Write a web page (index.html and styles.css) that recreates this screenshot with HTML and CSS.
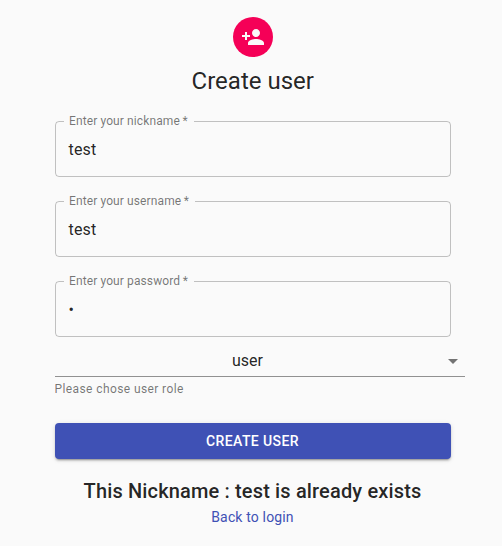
FILE: index.html
```html
<!DOCTYPE html>
<html lang="en">
<head>
<meta charset="utf-8">
<title>Create user</title>
<link rel="stylesheet" href="styles.css">
</head>
<body>
<main class="container">
  <div class="avatar">
    <svg viewBox="0 0 24 24" width="24" height="24" fill="currentColor"><path d="M15 12c2.210 0 4-1.790 4-4s-1.790-4-4-4-4 1.790-4 4 1.790 4 4 4zm-9-2V7H4v3H1v2h3v3h2v-3h3v-2H6zm9 4c-2.670 0-8 1.340-8 4v2h16v-2c0-2.660-5.330-4-8-4z"/></svg>
  </div>
  <h1 class="title">Create user</h1>
  <form class="form">
    <fieldset class="field"><legend>Enter your nickname&thinsp;*</legend><div class="value">test</div></fieldset>
    <fieldset class="field"><legend>Enter your username&thinsp;*</legend><div class="value">test</div></fieldset>
    <fieldset class="field field-last"><legend>Enter your password&thinsp;*</legend><div class="value">•</div></fieldset>
    <div class="select"><span>user</span><svg viewBox="0 0 24 24" width="24" height="24" fill="currentColor"><path d="M7 10l5 5 5-5z"/></svg></div>
    <p class="helper">Please chose user role</p>
    <button class="submit" type="button">CREATE USER</button>
  </form>
  <h2 class="error">This Nickname : test is already exists</h2>
  <a class="link">Back to login</a>
</main>
</body>
</html>
```
FILE: styles.css
```css
* { box-sizing: border-box; }
body {
  margin: 0;
  background: #fafafa;
  color: rgba(0, 0, 0, 0.87);
  font-family: Roboto, "Liberation Sans", sans-serif;
}
.container {
  width: 396px;
  margin-left: 54.5px;
  padding-top: 17px;
  display: flex;
  flex-direction: column;
  align-items: center;
}
.avatar {
  width: 40px;
  height: 40px;
  border-radius: 50%;
  background: #f50057;
  color: #fafafa;
  display: flex;
  align-items: center;
  justify-content: center;
}
.title {
  margin: 8px 0 0;
  padding-left: 0.5px;
  font-size: 24px;
  font-weight: 400;
  line-height: 32px;
}
.form { width: 100%; margin-top: 18px; }
.field {
  height: 62px;
  margin: 0 0 18px;
  padding: 0 13px;
  border: 1px solid rgba(0, 0, 0, 0.23);
  border-radius: 4px;
  min-width: 0;
}
.field-last { margin-bottom: 8px; }
.field legend {
  margin-left: -4.5px;
  padding: 0 6px 0 5px;
  font-size: 12px;
  line-height: 12px;
  letter-spacing: 0.11px;
  color: rgba(0, 0, 0, 0.54);
}
.value {
  font-size: 16px;
  line-height: 19px;
  letter-spacing: 0.15px;
  padding-top: 13px;
}
.select {
  width: 410px;
  height: 32px;
  border-bottom: 1px solid rgba(0, 0, 0, 0.42);
  display: flex;
  align-items: center;
  font-size: 16px;
}
.select span { flex: 1; text-align: center; }
.select svg { color: rgba(0, 0, 0, 0.54); }
.helper {
  margin: 2px 0 0;
  font-size: 12px;
  line-height: 20px;
  letter-spacing: 0.4px;
  color: rgba(0, 0, 0, 0.54);
}
.submit {
  display: block;
  width: 100%;
  height: 36px;
  margin-top: 24px;
  border: 0;
  border-radius: 4px;
  background: #3f51b5;
  color: #fff;
  font: 500 14px/24px Roboto, sans-serif;
  letter-spacing: 0.4px;
  box-shadow: 0 3px 1px -2px rgba(0,0,0,.2), 0 2px 2px 0 rgba(0,0,0,.14), 0 1px 5px 0 rgba(0,0,0,.12);
}
.error {
  margin: 16px 0 0;
  font-size: 20px;
  font-weight: 500;
  line-height: 32px;
  letter-spacing: 0.15px;
  white-space: nowrap;
}
.link {
  font-size: 14px;
  line-height: 20px;
  letter-spacing: 0.15px;
  color: #3f51b5;
}
```
